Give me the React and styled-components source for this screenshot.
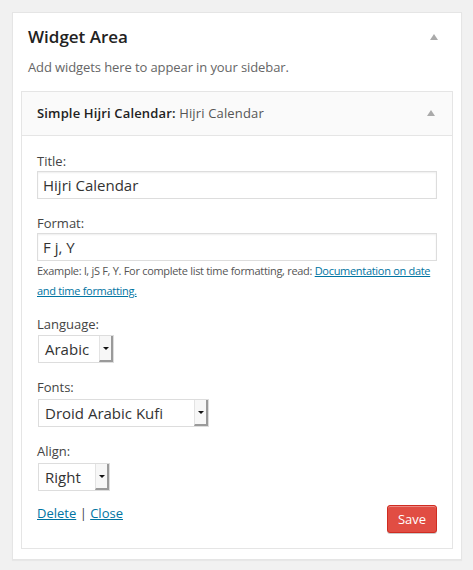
import React from "react";
import styled, { createGlobalStyle } from "styled-components";

const GlobalStyle = createGlobalStyle`
  html, body { margin: 0; padding: 0; background: #f1f1f1; }
  body { font-family: "Open Sans", "Noto Sans", sans-serif; color: #444; }
  * { box-sizing: border-box; }
`;

const Page = styled.div`
  padding: 12px 12px 10px 12px;
  width: 473px;
`;

const Sidebar = styled.div`
  width: 450px;
  background: #fff;
  border: 1px solid #e5e5e5;
  box-shadow: 0 1px 1px rgba(0, 0, 0, 0.04);
  padding: 12px 8px 10px 8px;
`;

const SidebarHead = styled.div`
  display: flex;
  align-items: center;
  justify-content: space-between;
  padding: 0 15px 0 7px;
`;

const SidebarTitle = styled.h2`
  margin: 0;
  font-size: 17px;
  font-weight: 600;
  line-height: 24px;
  color: #222;
`;

const Toggle = styled.span`
  width: 0;
  height: 0;
  border-left: 4px solid transparent;
  border-right: 4px solid transparent;
  border-bottom: 6px solid ${(p) => p.$color || "#aaa"};
`;

const Description = styled.p`
  margin: 9px 0 0 7px;
  font-size: 13px;
  line-height: 18px;
  letter-spacing: -0.1px;
  color: #666;
`;

const Widget = styled.div`
  margin-top: 15px;
  border: 1px solid #e5e5e5;
  background: #fff;
`;

const WidgetTop = styled.div`
  display: flex;
  align-items: center;
  justify-content: space-between;
  background: #fafafa;
  border-bottom: 1px solid #e5e5e5;
  padding: 12px 17px 13px 15px;
  font-size: 13px;
  line-height: 18px;
  font-weight: 600;
  letter-spacing: 0.15px;
  color: #222;
`;

const InTitle = styled.span`
  font-weight: 400;
  color: #555;
`;

const WidgetInside = styled.div`
  padding: 16px 15px 15px 15px;
`;

const Field = styled.div`
  margin-top: ${(p) => p.$gap ?? 0}px;
`;

const Label = styled.label`
  display: block;
  font-size: 13px;
  line-height: 18px;
  color: #444;
  margin-bottom: ${(p) => p.$mb ?? 1}px;
`;

const TextInput = styled.div`
  width: 400px;
  height: 28px;
  border: 1px solid #ddd;
  box-shadow: inset 0 1px 2px rgba(0, 0, 0, 0.07);
  background: #fff;
  padding: 0 5px;
  display: flex;
  align-items: center;
  font-size: 15px;
  color: #333;
`;

const Help = styled.p`
  margin: 0;
  font-size: 11px;
  line-height: 20px;
  letter-spacing: -0.3px;
  color: #555;
`;

const Link = styled.a`
  color: #0074a2;
  text-decoration: underline;
`;

const Select = styled.div`
  width: ${(p) => p.$w}px;
  height: 28px;
  margin-left: 1px;
  border: 1px solid #ddd;
  background: #fff;
  display: flex;
  align-items: stretch;
  font-size: 15px;
  color: #333;
`;

const SelectValue = styled.span`
  flex: 1;
  display: flex;
  align-items: center;
  padding-left: 6px;
`;

const DropButton = styled.span`
  width: 14px;
  border-left: 1px solid #e3e3e3;
  border-right: 2px solid #9a9a9a;
  border-bottom: 2px solid #9a9a9a;
  background: #f7f7f7;
  display: flex;
  align-items: center;
  justify-content: center;
  &::after {
    content: "";
    width: 0;
    height: 0;
    border-left: 3px solid transparent;
    border-right: 3px solid transparent;
    border-top: 3px solid #111;
  }
`;

const Actions = styled.div`
  margin-top: 13px;
  display: flex;
  justify-content: space-between;
  align-items: flex-start;
`;

const ControlLinks = styled.div`
  font-size: 13px;
  line-height: 18px;
  color: #444;
`;

const SaveButton = styled.button`
  margin-top: 1px;
  width: 50px;
  height: 28px;
  padding: 0;
  background: #e14d43;
  border: 1px solid #d02c21;
  border-radius: 3px;
  box-shadow: inset 0 1px 0 #ec8a85, 0 1px 0 #ccc;
  color: #fff;
  font-family: "Open Sans", sans-serif;
  font-size: 13px;
  line-height: 26px;
`;

function Dropdown({ w, value }) {
  return (
    <Select $w={w}>
      <SelectValue>{value}</SelectValue>
      <DropButton />
    </Select>
  );
}

export default function App() {
  return (
    <>
      <GlobalStyle />
      <Page>
        <Sidebar>
          <SidebarHead>
            <SidebarTitle>Widget Area</SidebarTitle>
            <Toggle $color="#aaa" />
          </SidebarHead>
          <Description>Add widgets here to appear in your sidebar.</Description>
          <Widget>
            <WidgetTop>
              <span>
                Simple Hijri Calendar: <InTitle>Hijri Calendar</InTitle>
              </span>
              <Toggle $color="#aaa" />
            </WidgetTop>
            <WidgetInside>
              <Field>
                <Label>Title:</Label>
                <TextInput>Hijri Calendar</TextInput>
              </Field>
              <Field $gap={15}>
                <Label>Format:</Label>
                <TextInput>F j, Y</TextInput>
                <Help>
                  Example: l, jS F, Y. For complete list time formatting, read:{" "}
                  <Link href="#">Documentation on date and time formatting.</Link>
                </Help>
              </Field>
              <Field $gap={14}>
                <Label $mb={2}>Language:</Label>
                <Dropdown w={76} value="Arabic" />
              </Field>
              <Field $gap={15}>
                <Label $mb={3}>Fonts:</Label>
                <Dropdown w={171} value="Droid Arabic Kufi" />
              </Field>
              <Field $gap={15}>
                <Label $mb={3}>Align:</Label>
                <Dropdown w={72} value="Right" />
              </Field>
              <Actions>
                <ControlLinks>
                  <Link href="#">Delete</Link> | <Link href="#">Close</Link>
                </ControlLinks>
                <SaveButton>Save</SaveButton>
              </Actions>
            </WidgetInside>
          </Widget>
        </Sidebar>
      </Page>
    </>
  );
}
